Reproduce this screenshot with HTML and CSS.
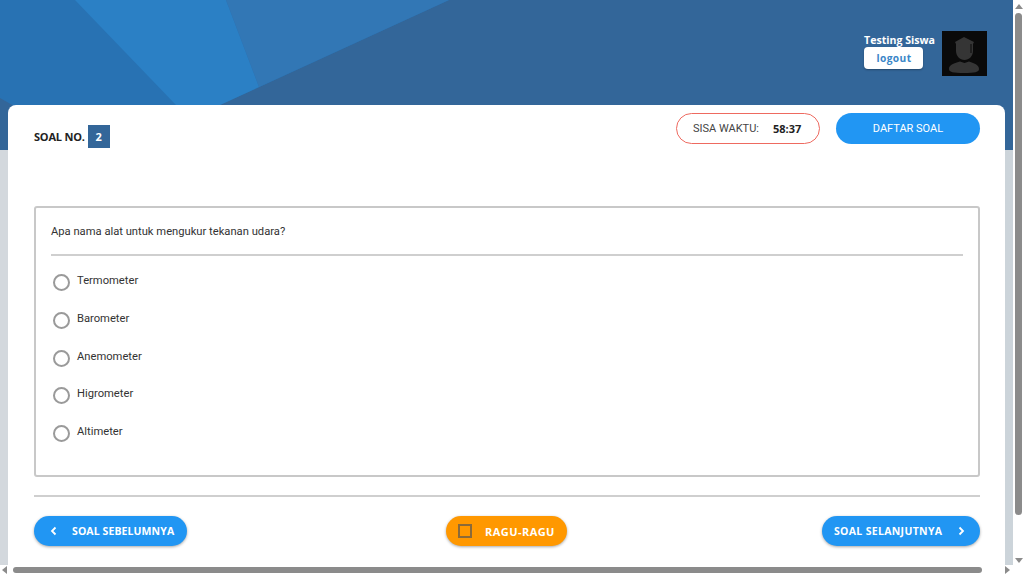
FILE: index.html
```html
<!DOCTYPE html>
<html lang="id">
<head>
<meta charset="utf-8">
<title>Ujian</title>
<link rel="stylesheet" href="styles.css">
</head>
<body>
<div class="window">
  <div class="viewport">
    <header class="banner">
      <svg class="banner-art" viewBox="0 0 1013 150" preserveAspectRatio="none" aria-hidden="true">
        <polygon class="tone-a" points="0,0 449,0 220,105 265,150 0,150"/>
        <polygon class="tone-b" points="75,0 226,0 259,87 220,105 176,105"/>
        <polygon class="tone-c" points="226,0 449,0 259,87"/>
        <polygon class="tone-d" points="0,98 30,115 30,150 0,150"/>
      </svg>
      <div class="user">
        <div class="user-info">
          <div class="user-name">Testing Siswa</div>
          <button class="logout">logout</button>
        </div>
        <div class="avatar">
          <svg viewBox="0 0 45 45" width="45" height="45" aria-hidden="true">
            <path class="avatar-shape" d="M22 6 L32 11 L31 13 V20 C31 25 27 29 22.500 29 C18 29 14 25 14 20 V13 L13 11 Z"/>
            <path class="avatar-shape" d="M7 38 C7 34 11 32.500 18 30.500 L22.500 32 L27 30.500 C33 32.500 37 34 37 38 C37 41 33 42 22 42 C11 42 7 41 7 38 Z"/>
            <rect class="avatar-tassel" x="28.500" y="13" width="1" height="9"/>
          </svg>
        </div>
      </div>
    </header>
    <main class="card">
      <div class="card-top">
        <div class="soal-no">
          <span class="soal-label">SOAL NO.</span>
          <span class="soal-num">2</span>
        </div>
        <div class="top-actions">
          <div class="timer"><span class="timer-label">SISA WAKTU:</span><span class="timer-value">58:37</span></div>
          <button class="daftar">DAFTAR SOAL</button>
        </div>
      </div>
      <section class="question">
        <p class="question-text">Apa nama alat untuk mengukur tekanan udara?</p>
        <ul class="options">
          <li class="option"><span class="radio"></span><span class="option-text">Termometer</span></li>
          <li class="option"><span class="radio"></span><span class="option-text">Barometer</span></li>
          <li class="option"><span class="radio"></span><span class="option-text">Anemometer</span></li>
          <li class="option"><span class="radio"></span><span class="option-text">Higrometer</span></li>
          <li class="option"><span class="radio"></span><span class="option-text">Altimeter</span></li>
        </ul>
      </section>
      <nav class="nav-row">
        <button class="nav-btn blue prev">
          <svg class="chev" viewBox="0 0 8 10" width="8" height="10" aria-hidden="true"><path d="M5.500 1.500 L2 5 L5.500 8.500"/></svg>
          SOAL SEBELUMNYA
        </button>
        <button class="nav-btn orange ragu"><span class="check"></span>RAGU-RAGU</button>
        <button class="nav-btn blue next">
          SOAL SELANJUTNYA
          <svg class="chev" viewBox="0 0 8 10" width="8" height="10" aria-hidden="true"><path d="M2.500 1.500 L6 5 L2.500 8.500"/></svg>
        </button>
      </nav>
    </main>
  </div>
  <div class="scroll-v">
    <span class="arrow up"></span>
    <span class="thumb-v"></span>
    <span class="arrow down"></span>
  </div>
  <div class="scroll-h">
    <span class="arrow left"></span>
    <span class="thumb-h"></span>
    <span class="arrow right"></span>
  </div>
  <div class="scroll-corner"></div>
</div>
</body>
</html>
```
FILE: styles.css
```css
* { box-sizing: border-box; }
html, body { margin: 0; height: 100%; overflow: hidden; background: #fff; }
body { font-family: "Open Sans", "Liberation Sans", sans-serif; color: #333; }
button { font: inherit; border: 0; cursor: pointer; }

.window {
  width: 1024px;
  height: 575px;
  display: grid;
  grid-template-columns: 1013px 11px;
  grid-template-rows: 565px 10px;
}
.viewport { overflow: hidden; background: linear-gradient(90deg, #d3d8dd, #ccd4da); }

.banner { position: relative; height: 150px; background: #336699; }
.banner-art { position: absolute; inset: 0; width: 100%; height: 100%; }
.tone-a { fill: #2872b3; }
.tone-b { fill: #2b80c5; }
.tone-c { fill: #3277b5; }
.tone-d { fill: #336699; }

.user {
  position: relative;
  display: flex;
  justify-content: flex-end;
  gap: 7px;
  padding: 31px 26px 0 0;
}
.user-info { display: flex; flex-direction: column; align-items: flex-start; }
.user-name { font-size: 10.600px; font-weight: 700; line-height: 19px; color: #fff; }
.logout {
  width: 59px;
  height: 22px;
  margin-top: -3px;
  border-radius: 4px;
  background: #fff;
  color: #3a86c8;
  font-size: 10.200px;
  font-weight: 700;
  letter-spacing: .4px;
  box-shadow: 0 1px 2px rgba(0, 0, 0, .3);
  padding: 0 0 0 1px;
}
.avatar { width: 45px; height: 45px; background: #0a0a0a; }
.avatar-shape { fill: #353535; }
.avatar-tassel { fill: #0a0a0a; }

.card {
  position: relative;
  margin: -45px 8px 0;
  height: 460px;
  padding: 8px 25px 0 26px;
  background: #fff;
  border-radius: 8px 8px 0 0;
}
.card-top { display: flex; justify-content: space-between; align-items: flex-start; height: 93px; }
.soal-no { display: flex; align-items: center; gap: 3px; margin-top: 12px; }
.soal-label { font-size: 11px; font-weight: 700; letter-spacing: -.2px; color: #222; }
.soal-num {
  width: 22px;
  height: 23px;
  display: flex;
  align-items: center;
  justify-content: center;
  background: #336699;
  color: #fff;
  font-size: 11px;
  font-weight: 700;
}
.top-actions { display: flex; gap: 16px; }
.timer {
  width: 144px;
  height: 31px;
  display: flex;
  align-items: center;
  gap: 14px;
  padding-left: 16px;
  border: 1px solid #ee6a60;
  border-radius: 16px;
  font-family: Roboto, "Liberation Sans", sans-serif;
  font-size: 11px;
}
.timer-label { color: #444; }
.timer-value { font-family: "Open Sans", sans-serif; font-weight: 700; font-size: 11px; color: #222; }
.daftar {
  width: 144px;
  height: 31px;
  border-radius: 16px;
  background: #2196f3;
  color: #fff;
  font-family: Roboto, "Liberation Sans", sans-serif;
  font-size: 11px;
  padding: 0;
}

.question {
  height: 271px;
  border: 2px solid #c8c8c8;
  border-radius: 3px;
  padding: 0 15px;
  font-family: Roboto, "Liberation Sans", sans-serif;
  color: #333;
}
.question-text {
  margin: 0;
  height: 48px;
  padding-top: 15px;
  border-bottom: 2px solid #cfcfcf;
  font-size: 11.200px;
  line-height: 18px;
}
.options { list-style: none; margin: 0; padding: 16px 0 0 2px; }
.option { display: flex; gap: 7px; height: 37.800px; font-size: 11.200px; }
.radio {
  width: 17px;
  height: 17px;
  margin-top: 2px;
  border: 2px solid #9a9a9a;
  border-radius: 50%;
}
.option-text { line-height: 18px; }

.nav-row {
  display: flex;
  justify-content: space-between;
  align-items: flex-start;
  height: 70px;
  margin-top: 18px;
  padding-top: 19px;
  border-top: 2px solid #cfcfcf;
}
.nav-btn {
  height: 30px;
  display: flex;
  align-items: center;
  border-radius: 15px;
  color: #fff;
  font-size: 10.500px;
  font-weight: 700;
  box-shadow: 0 1px 3px rgba(0, 0, 0, .35);
  padding: 0;
}
.blue { background: #2196f3; }
.orange { background: #ff9800; }
.prev { width: 153px; padding-left: 16px; gap: 14px; letter-spacing: .1px; }
.next { width: 158px; padding-left: 12px; gap: 15px; letter-spacing: .32px; }
.ragu { width: 121px; margin-left: 4px; padding-left: 12px; gap: 13px; font-size: 11px; letter-spacing: .45px; }
.chev { fill: none; stroke: #fff; stroke-width: 1.800; }
.check { width: 14px; height: 14px; border: 2px solid #8a6a3a; }

.scroll-v, .scroll-h { display: flex; align-items: center; background: #fff; }
.scroll-v { flex-direction: column; padding: 4px 0 2px; }
.thumb-v { width: 7px; height: 502px; margin-top: 4px; background: #8b8b8b; border-radius: 4px; }
.scroll-h { grid-column: 1; padding: 0 0 0 2px; }
.thumb-h { width: 969px; height: 6px; margin-left: 6px; background: #8b8b8b; border-radius: 3px; }
.scroll-v .down { margin-top: auto; }
.scroll-h .right { margin-left: 23px; }
.arrow { width: 0; height: 0; border: 4px solid transparent; }
.up { border-top-width: 0; border-bottom: 5px solid #8b8b8b; }
.down { border-bottom-width: 0; border-top: 5px solid #8b8b8b; }
.left { border-left-width: 0; border-right: 5px solid #8b8b8b; }
.right { border-right-width: 0; border-left: 5px solid #8b8b8b; }
.scroll-corner { background: #fff; }
```
